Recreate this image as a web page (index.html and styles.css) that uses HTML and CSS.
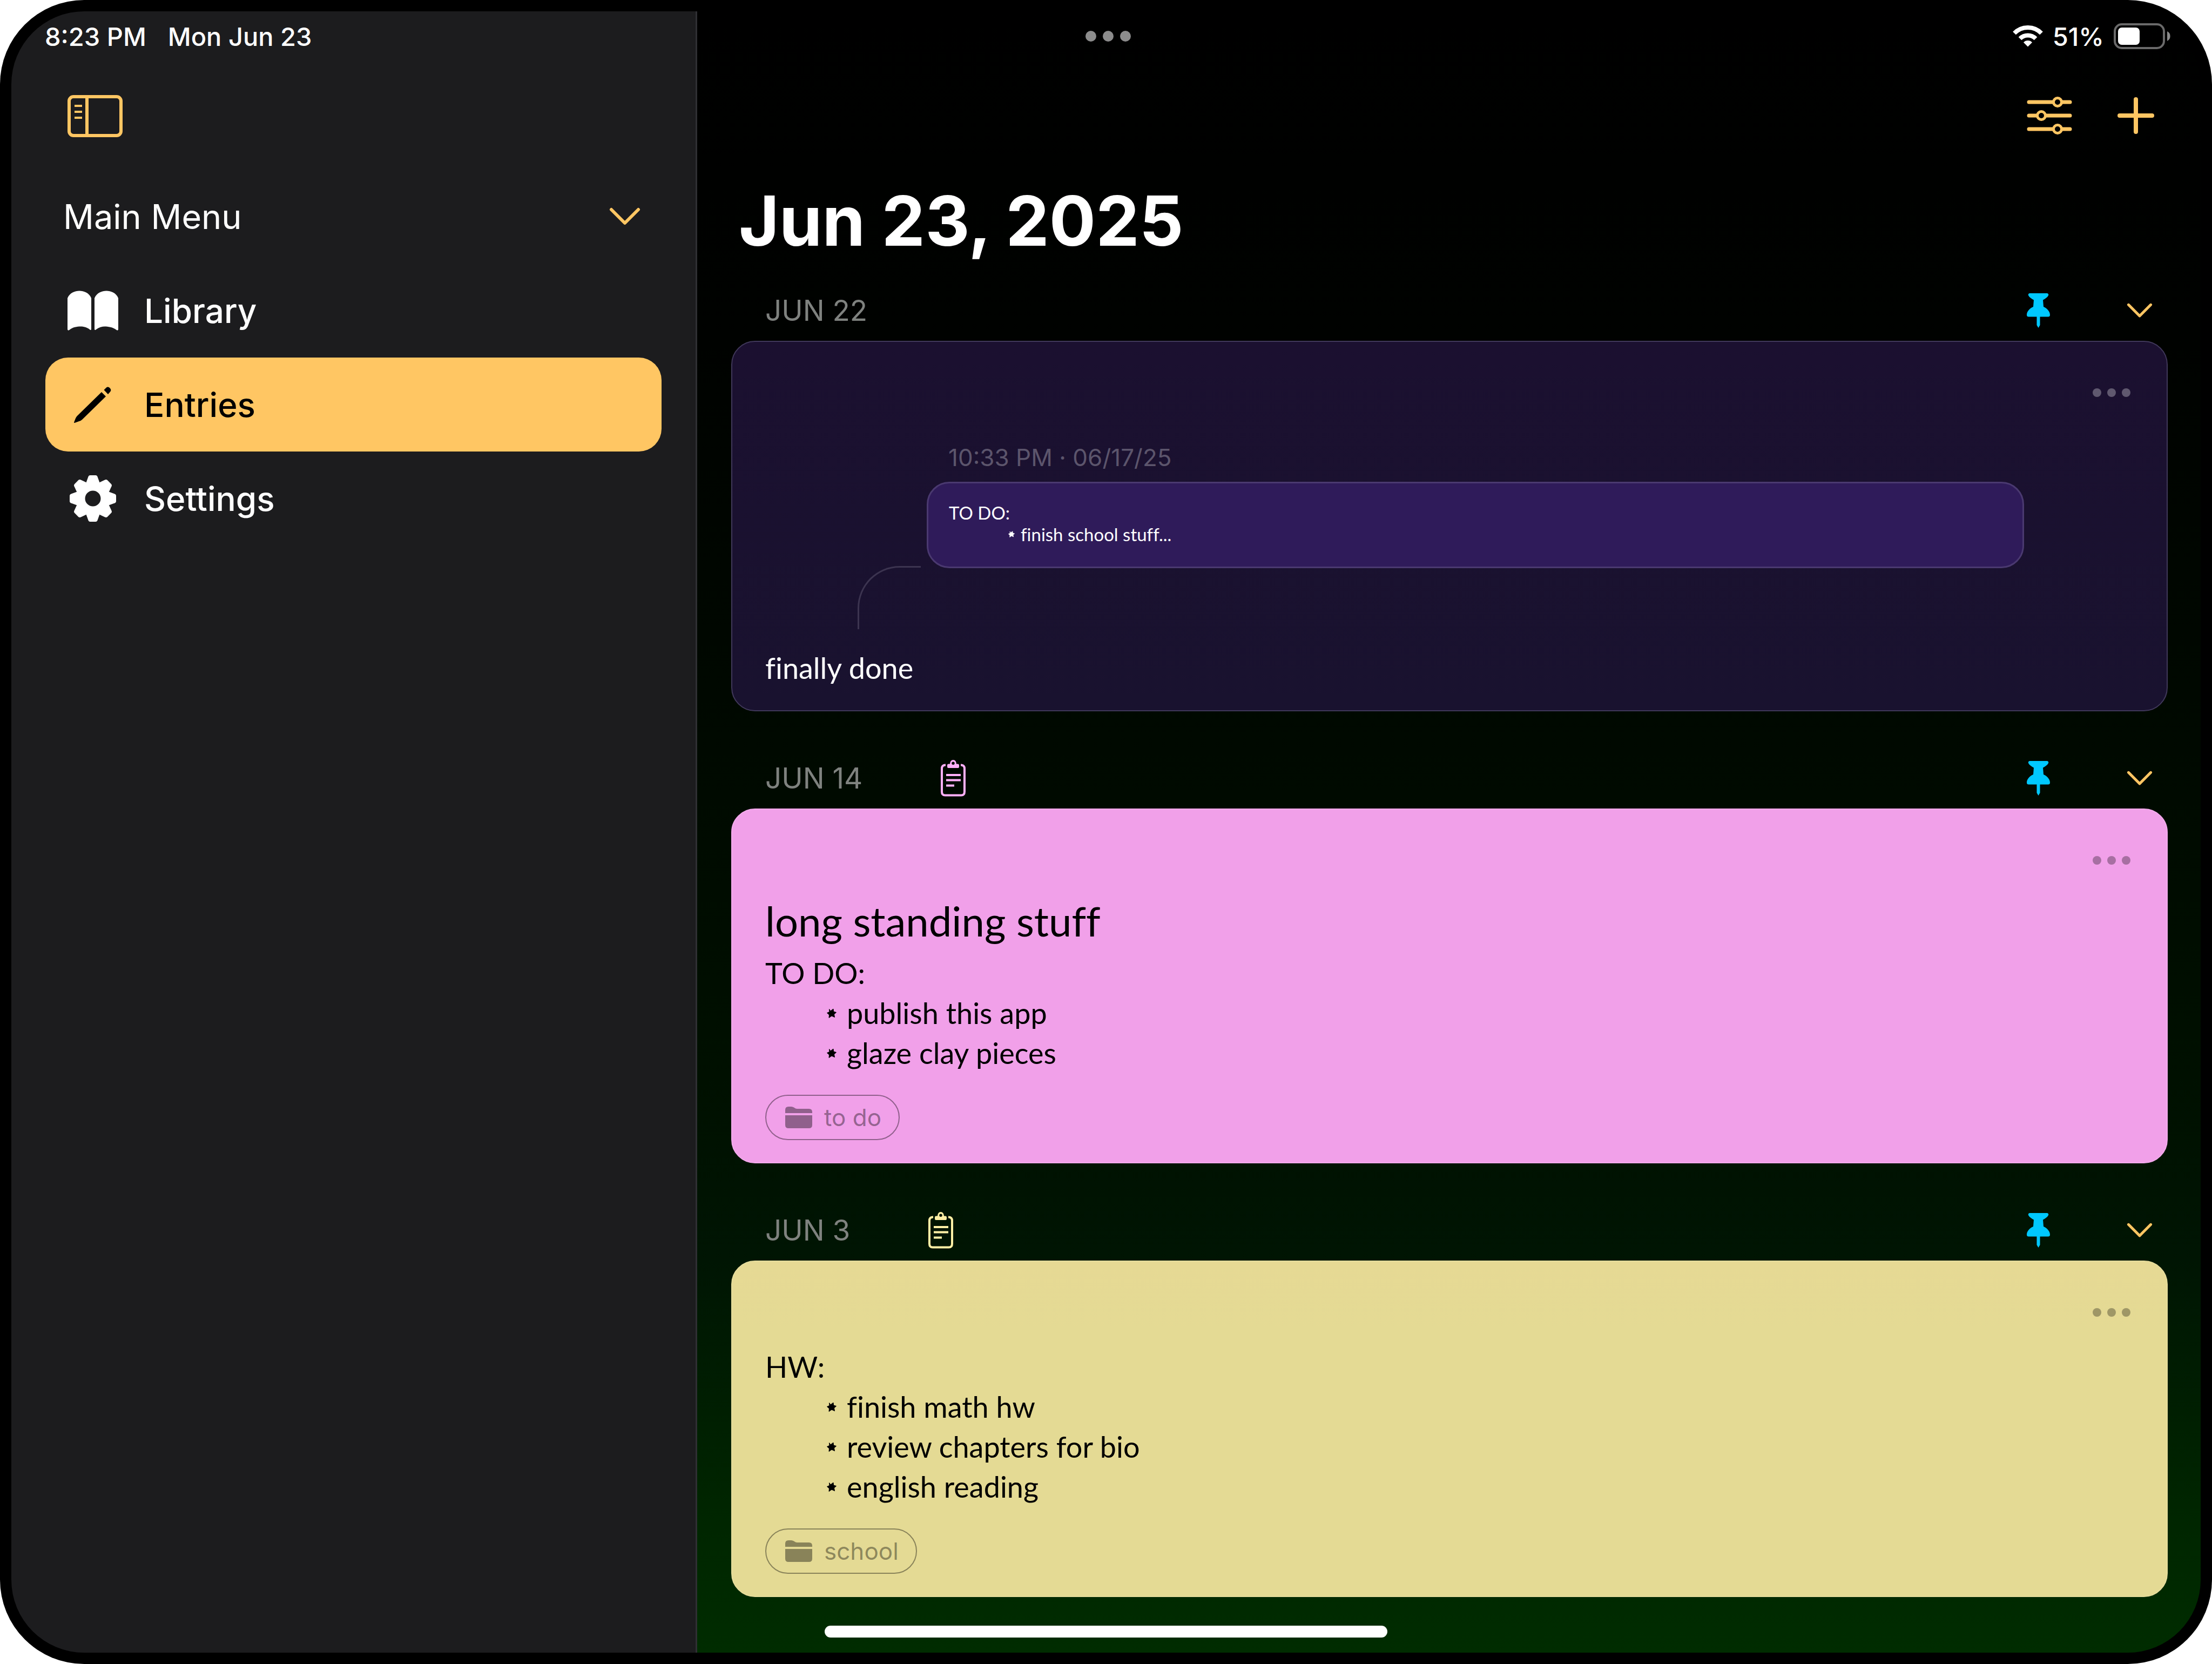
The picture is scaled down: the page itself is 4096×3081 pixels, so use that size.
FILE: index.html
```html
<!DOCTYPE html>
<html lang="en">
<head>
<meta charset="utf-8">
<meta name="viewport" content="width=device-width, initial-scale=1">
<title>Entries</title>
<link rel="stylesheet" href="styles.css">
</head>
<body>
<svg class="symbols" width="0" height="0" aria-hidden="true">
  <symbol id="chevron" viewBox="0 0 58 34"><path d="M4 4 29 29 54 4" fill="none" stroke="currentColor" stroke-width="6" stroke-linecap="round" stroke-linejoin="round"/></symbol>
  <symbol id="pin" viewBox="0 0 43 64"><path fill="currentColor" d="M5 0H38Q41 1 40 4C38 8 34 10 30 12.500L31 25C38 28 43 34 43 40Q43 43.500 39.500 43.500H24.500V59L21.500 64 18.500 59V43.500H3.500Q0 43.500 0 40C0 34 5 28 12 25L13 12.500C9 10 5 8 3 4Q2 1 5 0Z"/></symbol>
  <symbol id="clipboard" viewBox="0 0 46 68"><path d="M9 9.500H8Q2 10 2 16V59Q2 65.500 8 65.500H38Q44 65.500 44 59V16Q44 10 38 9.500H37M10 28H37M10 37.500H37M10 47.500H25" fill="none" stroke="currentColor" stroke-width="4"/><path fill="currentColor" fill-rule="evenodd" d="M14 15Q12 15 12 12.500V10Q12 7.500 14.500 7.500H17Q17.500 0 23 0T29 7.500H31.500Q34 7.500 34 10V12.500Q34 15 32 15ZM23 3.500A2.700 2.700 0 1 0 23 9A2.700 2.700 0 1 0 23 3.500Z"/></symbol>
  <symbol id="folder" viewBox="0 0 50 40"><path fill="currentColor" d="M0 12V6Q0 0 6 0H11C16 0 18 4 22 4H44Q50 4 50 10V12ZM0 16H50V34Q50 40 44 40H6Q0 40 0 34Z"/></symbol>
  <symbol id="star" viewBox="0 0 18 18"><path fill="currentColor" stroke="currentColor" stroke-width="1" stroke-linejoin="round" d="M7 5 12 1 12.500 6 17.500 7.500 13.500 11 14.500 16.500 9 14 4 17.500 4.500 12 0.500 8.500 5 6.500 4.500 1.500Z"/></symbol>
</svg>

<div class="device">
  <div class="screen">
    <aside class="sidebar">
      <div class="toolbar">
        <button class="icon-button" aria-label="Toggle sidebar">
          <svg width="102" height="78" viewBox="0 0 102 78" fill="none" stroke="currentColor"><rect x="3" y="3" width="96" height="72" rx="8" stroke-width="6"/><path d="M36 3V75" stroke-width="6"/><path d="M13 20H27M13 31H27M13 42H27" stroke-width="4"/></svg>
        </button>
      </div>
      <button class="menu-heading">
        <span>Main Menu</span>
        <svg class="accent" width="58" height="34"><use href="#chevron"/></svg>
      </button>
      <nav class="nav">
        <a class="nav-item" href="#library">
          <svg width="94" height="86" viewBox="0 0 94 86" fill="currentColor"><path d="M0 20C4 10 14 6.500 22 6.500S40 10 44 20V78Q43 80 41 78C36 74 30 72.500 24 72.500S9 74 4 78.500Q1 81 0 78ZM94 20C90 10 80 6.500 72 6.500S54 10 50 20V78Q51 80 53 78C58 74 64 72.500 69 72.500S85 74 90 78.500Q93 81 94 78Z"/></svg>
          Library
        </a>
        <a class="nav-item is-active" href="#entries" aria-current="page">
          <svg width="94" height="86" viewBox="0 0 94 86" fill="currentColor"><path d="M63 20 71 28 27 71 Q24 74 20 74.500L13 77Q12 77 12 76L15 68.500Q16 66 18 64ZM67.500 16 71.500 12Q75 9 78.500 12.500T79 19.500L75 24Z"/></svg>
          Entries
        </a>
        <a class="nav-item" href="#settings">
          <svg width="94" height="86" viewBox="-47 -43 94 86"><defs><path id="tooth" d="M-13-28-9-39Q-8-43-5-43H5Q8-43 9-39L13-28Z"/></defs><g fill="currentColor"><circle r="23" fill="none" stroke="currentColor" stroke-width="17"/><use href="#tooth"/><use href="#tooth" transform="rotate(45)"/><use href="#tooth" transform="rotate(90)"/><use href="#tooth" transform="rotate(135)"/><use href="#tooth" transform="rotate(180)"/><use href="#tooth" transform="rotate(225)"/><use href="#tooth" transform="rotate(270)"/><use href="#tooth" transform="rotate(315)"/></g></svg>
          Settings
        </a>
      </nav>
    </aside>

    <main class="main">
      <div class="toolbar toolbar-main">
        <button class="icon-button" aria-label="Filter">
          <svg width="84" height="74" viewBox="0 0 84 74" fill="none" stroke="currentColor" stroke-linecap="round"><path d="M4 12H48M66 12H80M4 37H18M36 37H80M4 62H48M66 62H80" stroke-width="7"/><g stroke-width="5"><circle cx="57" cy="12" r="7.500"/><circle cx="27" cy="37" r="7.500"/><circle cx="57" cy="62" r="7.500"/></g></svg>
        </button>
        <button class="icon-button" aria-label="New entry">
          <svg width="68" height="68" viewBox="0 0 68 68" stroke="currentColor" stroke-width="8" stroke-linecap="round"><path d="M34 4V64M4 34H64"/></svg>
        </button>
      </div>
      <h1 class="title">Jun 23, 2025</h1>

      <div class="entries">
        <section class="entry">
          <header class="entry-head">
            <h2 class="entry-date">JUN 22</h2>
            <div class="entry-actions">
              <button class="icon-button pin" aria-label="Unpin"><svg width="43" height="64"><use href="#pin"/></svg></button>
              <button class="icon-button" aria-label="Collapse"><svg width="48" height="28"><use href="#chevron"/></svg></button>
            </div>
          </header>
          <article class="card card-violet">
            <button class="more" aria-label="More"><i class="dot"></i><i class="dot"></i><i class="dot"></i></button>
            <div class="reply">
              <p class="reply-time">10:33 PM · 06/17/25</p>
              <blockquote class="quote">
                <p>TO DO:</p>
                <ul><li><svg><use href="#star"/></svg>finish school stuff...</li></ul>
              </blockquote>
              <div class="reply-line"></div>
            </div>
            <div class="note"><p>finally done</p></div>
          </article>
        </section>

        <section class="entry">
          <header class="entry-head">
            <h2 class="entry-date">JUN 14</h2>
            <svg class="clip clip-pink" width="46" height="68"><use href="#clipboard"/></svg>
            <div class="entry-actions">
              <button class="icon-button pin" aria-label="Unpin"><svg width="43" height="64"><use href="#pin"/></svg></button>
              <button class="icon-button" aria-label="Collapse"><svg width="48" height="28"><use href="#chevron"/></svg></button>
            </div>
          </header>
          <article class="card card-pink">
            <button class="more" aria-label="More"><i class="dot"></i><i class="dot"></i><i class="dot"></i></button>
            <h3 class="note-title">long standing stuff</h3>
            <div class="note">
              <p>TO DO:</p>
              <ul>
                <li><svg><use href="#star"/></svg>publish this app</li>
                <li><svg><use href="#star"/></svg>glaze clay pieces</li>
              </ul>
            </div>
            <a class="tag" href="#to-do"><svg width="50" height="40"><use href="#folder"/></svg>to do</a>
          </article>
        </section>

        <section class="entry">
          <header class="entry-head">
            <h2 class="entry-date">JUN 3</h2>
            <svg class="clip clip-yellow" width="46" height="68"><use href="#clipboard"/></svg>
            <div class="entry-actions">
              <button class="icon-button pin" aria-label="Unpin"><svg width="43" height="64"><use href="#pin"/></svg></button>
              <button class="icon-button" aria-label="Collapse"><svg width="48" height="28"><use href="#chevron"/></svg></button>
            </div>
          </header>
          <article class="card card-yellow">
            <button class="more" aria-label="More"><i class="dot"></i><i class="dot"></i><i class="dot"></i></button>
            <div class="note">
              <p>HW:</p>
              <ul>
                <li><svg><use href="#star"/></svg>finish math hw</li>
                <li><svg><use href="#star"/></svg>review chapters for bio</li>
                <li><svg><use href="#star"/></svg>english reading</li>
              </ul>
            </div>
            <a class="tag" href="#school"><svg width="50" height="40"><use href="#folder"/></svg>school</a>
          </article>
        </section>
      </div>
    </main>

    <div class="status">
      <div class="status-left"><span>8:23 PM</span><span>Mon Jun 23</span></div>
      <div class="status-dots"><i class="dot"></i><i class="dot"></i><i class="dot"></i></div>
      <div class="status-right">
        <svg width="56" height="40" viewBox="0 0 56 40"><g fill="none" stroke="currentColor" stroke-width="8"><path d="M3 14.500A35 35 0 0 1 53 14.500"/><path d="M13.500 24.500A20.500 20.500 0 0 1 42.500 24.500"/></g><path fill="currentColor" d="M28 39.500 20 31.500A11 11 0 0 1 36 31.500Z"/></svg>
        <span>51%</span>
        <svg width="106" height="48" viewBox="0 0 106 48"><rect x="2" y="2" width="91" height="44" rx="13" fill="none" stroke="#6a6a6a" stroke-width="4"/><rect x="8" y="8" width="40" height="32" rx="7" fill="#fff"/><path d="M99 15A10 10 0 0 1 99 33Z" fill="#8a8a8a"/></svg>
      </div>
    </div>
    <div class="home-bar"></div>
  </div>
</div>
</body>
</html>
```
FILE: styles.css
```css
* {
  box-sizing: border-box;
}

body,
h1,
h2,
h3,
p,
ul,
blockquote {
  margin: 0;
  padding: 0;
  font-weight: 400;
}

body {
  background: #fff;
  color: #fff;
  font-family: Inter, "Liberation Sans", sans-serif;
}

button {
  margin: 0;
  padding: 0;
  border: 0;
  background: none;
  color: inherit;
  font: inherit;
  cursor: pointer;
}

a {
  color: inherit;
  text-decoration: none;
}

svg {
  display: block;
  flex: none;
}

.symbols {
  position: absolute;
}

/* Device frame */
.device {
  display: flex;
  min-height: 100vh;
  padding: 21px;
  border-radius: 156px;
  background: #000;
}

.screen {
  display: grid;
  flex: 1;
  grid-template-columns: 1270px minmax(0, 1fr);
  border-radius: 135px;
  overflow: hidden;
}

/* Status bar spans both panes */
.status {
  display: grid;
  grid-area: 1 / 1 / 2 / 3;
  grid-template-columns: 1fr auto 1fr;
  align-items: center;
  align-self: start;
  height: 92px;
  padding: 0 55px 0 62px;
  font-size: 47px;
  font-weight: 500;
}

.status-left,
.status-right,
.status-dots {
  display: flex;
  align-items: center;
}

.status-left {
  gap: 40px;
}

.status-dots {
  gap: 12px;
  color: #8c8c8c;
}

.status-dots .dot {
  width: 20px;
  height: 20px;
}

.status-right {
  justify-content: flex-end;
  gap: 18px;
}

.dot {
  width: 16px;
  height: 16px;
  border-radius: 50%;
  background: currentColor;
}

.home-bar {
  grid-area: 1 / 1 / 2 / 3;
  align-self: end;
  justify-self: center;
  width: 1042px;
  max-width: 40%;
  height: 22px;
  margin-bottom: 28px;
  border-radius: 11px;
  background: #fff;
}

/* Sidebar */
.sidebar {
  grid-area: 1 / 1;
  padding: 92px 63px 0;
  border-right: 3px solid #2f2f33;
  background: #1c1c1e;
}

.toolbar {
  display: flex;
  align-items: center;
  height: 204px;
  padding: 0 41px;
}

.icon-button,
.accent {
  display: block;
  color: #ffc663;
}

.menu-heading {
  display: flex;
  align-items: center;
  justify-content: space-between;
  width: 100%;
  height: 168px;
  margin-bottom: 3px;
  padding: 0 39px 0 33px;
  font-size: 63px;
}

.nav-item {
  display: flex;
  align-items: center;
  gap: 48px;
  height: 174px;
  padding: 0 41px;
  border-radius: 42px;
  font-size: 62px;
  font-weight: 500;
}

.nav-item.is-active {
  background: #ffc663;
  color: #000;
}

/* Entry list */
.main {
  grid-area: 1 / 2;
  padding: 92px 61px 102px 63px;
  background: linear-gradient(#000 0%, #000200 20%, #000900 45%, #001000 65%, #001503 76%, #002500 91%, #002c00 100%);
}

.toolbar-main {
  justify-content: flex-end;
  gap: 84px;
  height: 202px;
  padding: 0 25px;
}

.title {
  margin-bottom: 16px;
  padding-left: 14px;
  font-size: 128px;
  font-weight: 700;
  line-height: 188px;
}

.entries {
  display: flex;
  flex-direction: column;
  gap: 68px;
}

.entry-head {
  display: flex;
  align-items: center;
  height: 112px;
  padding: 0 28px 0 63px;
}

.entry-date {
  color: #7f827f;
  font-size: 53px;
}

.clip {
  margin-left: 145px;
}

.clip-pink {
  color: #ffb0f9;
}

.clip-yellow {
  color: #ffefa5;
}

.entry-actions {
  display: flex;
  align-items: center;
  gap: 142px;
  margin-left: auto;
}

.pin {
  color: #00c8ff;
}

.card {
  padding: 58px 61px 41px;
  border: 2px solid transparent;
  border-radius: 44px;
  color: #000;
}

.card-violet {
  border-color: #40385a;
  background: linear-gradient(#1b1030, #19122f);
  color: #fff;
}

.card-pink {
  border-color: #f3aaec;
  background: #f1a0e9;
}

.card-yellow {
  border-color: #e6dc9c;
  background: linear-gradient(#e6d994, #e4da94 20%);
}

.more {
  display: flex;
  align-items: center;
  gap: 11px;
  height: 72px;
  margin: 0 6px 28px auto;
  opacity: 0.3;
}

/* Journal text, with f-pairs left unjoined */
.note,
.note-title,
.quote {
  font-family: Lato, "Liberation Sans", sans-serif;
  font-variant-ligatures: none;
}

.note-title {
  margin-bottom: 12px;
  font-size: 76px;
  line-height: 96px;
}

.note {
  font-size: 54px;
  line-height: 74px;
}

.note ul {
  padding-left: 114px;
}

.note li,
.quote li {
  display: flex;
  align-items: center;
  gap: 19px;
}

.note li svg {
  width: 18px;
  height: 18px;
}

.tag {
  display: flex;
  align-items: center;
  gap: 22px;
  width: fit-content;
  height: 84px;
  margin-top: 40px;
  padding: 0 32px 0 35px;
  border: 2px solid;
  border-radius: 42px;
  color: rgba(0, 0, 0, 0.4);
  font-size: 44px;
}

/* Quoted entry with its connecting line */
.reply {
  margin: 0 203px 35px 171px;
  padding-top: 26px;
}

.reply-time {
  margin: 0 0 15px 168px;
  color: #5c556c;
  font-size: 44px;
  line-height: 60px;
}

.quote {
  margin-left: 128px;
  padding: 34px 38px 40px;
  border: 3px solid #4a3970;
  border-radius: 42px;
  background: #2f1b5a;
  font-size: 33px;
  line-height: 40px;
}

.quote ul {
  padding-left: 110px;
}

.quote li {
  gap: 11px;
}

.quote li svg {
  width: 12px;
  height: 12px;
}

.reply-line {
  width: 117px;
  height: 117px;
  margin-top: -4px;
  border-top: 3px solid #3c3450;
  border-left: 3px solid #3c3450;
  border-top-left-radius: 78px;
}
```
